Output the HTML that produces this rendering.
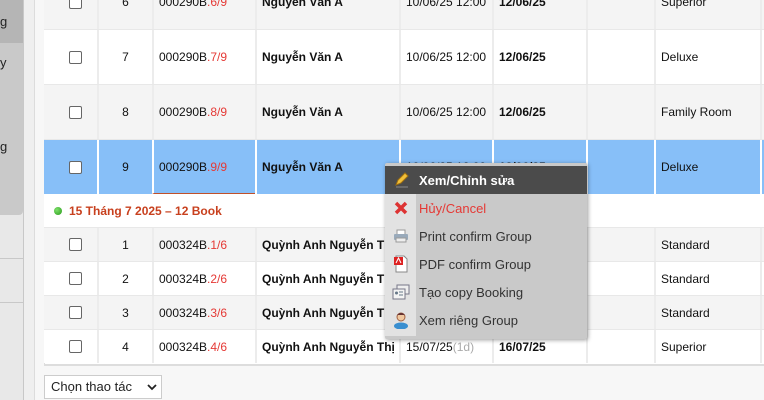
<!DOCTYPE html><html><head><meta charset="utf-8"><style>
body{margin:0;width:764px;height:400px;overflow:hidden;background:#f7f7f7;font-family:"Liberation Sans",Arial,sans-serif;font-size:12px;color:#111;position:relative}
.a{position:absolute}
.r{position:absolute;left:44px;width:730px;border-bottom:1px solid #e8e8e8}
.c{position:absolute;top:0;bottom:0;border-left:2px solid #ececec;display:flex;align-items:center;box-sizing:border-box;padding-left:5px}
.cb{width:11px;height:11px;border:1px solid #666;border-radius:2px;background:#fff;margin-left:20px}
.red{color:#e53935}
b{font-weight:bold}
.mi{position:absolute;left:385px;width:202px;height:28px;display:flex;align-items:center;font-size:13px;color:#333}
.ic{width:31px;height:28px;display:flex;align-items:center;justify-content:center}
</style></head><body>
<div class="a" style="left:0;top:0;width:23px;height:400px;background:#e8e8e8;border-right:1px solid #c8c8c8"></div>
<div class="a" style="left:0;top:0;width:23px;height:43px;background:#b5b5b5;font-size:13px;color:#222"><span class="a" style="left:0;top:14px">g</span></div>
<div class="a" style="left:0;top:43px;width:23px;height:172px;background:#c9c9c9;border-bottom-right-radius:4px;font-size:13px;color:#222"><span class="a" style="left:0;top:12px">y</span><span class="a" style="left:0;top:96px">g</span></div>
<div class="a" style="left:0;top:258px;width:23px;border-top:1px solid #c8c8c8"></div>
<div class="a" style="left:0;top:302px;width:23px;border-top:1px solid #c8c8c8"></div>
<div class="a" style="left:24px;top:0;width:10px;height:400px;background:#efefef;border-right:1px solid #dcdcdc"></div>
<div class="a" style="left:44px;top:0;width:720px;height:364px;background:#fff;border-left:1px solid #ddd;border-bottom:2px solid #ddd"></div>

<div class="r" style="top:-25px;height:54px;background:#f4f4f4"><div class="c" style="left:0;width:53px;border:0"><div class="cb"></div></div><div class="c" style="left:53px;width:55px;justify-content:center;padding:0">6</div><div class="c" style="left:108px;width:103px">000290B<span class="red">.6/9</span></div><div class="c" style="left:211px;width:144px"><b>Nguyễn Văn A</b></div><div class="c" style="left:355px;width:93px">10/06/25 12:00</div><div class="c" style="left:448px;width:94px"><b>12/06/25</b></div><div class="c" style="left:542px;width:68px"></div><div class="c" style="left:610px;width:106px">Superior</div><div class="c" style="left:716px;width:20px"></div></div>
<div class="r" style="top:30px;height:54px;background:#fff"><div class="c" style="left:0;width:53px;border:0"><div class="cb"></div></div><div class="c" style="left:53px;width:55px;justify-content:center;padding:0">7</div><div class="c" style="left:108px;width:103px">000290B<span class="red">.7/9</span></div><div class="c" style="left:211px;width:144px"><b>Nguyễn Văn A</b></div><div class="c" style="left:355px;width:93px">10/06/25 12:00</div><div class="c" style="left:448px;width:94px"><b>12/06/25</b></div><div class="c" style="left:542px;width:68px"></div><div class="c" style="left:610px;width:106px">Deluxe</div><div class="c" style="left:716px;width:20px"></div></div>
<div class="r" style="top:85px;height:54px;background:#f4f4f4"><div class="c" style="left:0;width:53px;border:0"><div class="cb"></div></div><div class="c" style="left:53px;width:55px;justify-content:center;padding:0">8</div><div class="c" style="left:108px;width:103px">000290B<span class="red">.8/9</span></div><div class="c" style="left:211px;width:144px"><b>Nguyễn Văn A</b></div><div class="c" style="left:355px;width:93px">10/06/25 12:00</div><div class="c" style="left:448px;width:94px"><b>12/06/25</b></div><div class="c" style="left:542px;width:68px"></div><div class="c" style="left:610px;width:106px">Family Room</div><div class="c" style="left:716px;width:20px"></div></div>
<div class="r" style="top:140px;height:54px;background:#87bff8;border-bottom:1px solid #fff"><div class="c" style="left:0;width:53px;border:0"><div class="cb"></div></div><div class="c" style="left:53px;width:55px;justify-content:center;padding:0;border-color:#fff">9</div><div class="c" style="left:108px;width:103px;border-color:#fff;border-bottom:1px solid #c0502a">000290B<span class="red">.9/9</span></div><div class="c" style="left:211px;width:144px;border-color:#fff"><b>Nguyễn Văn A</b></div><div class="c" style="left:355px;width:93px;border-color:#fff">10/06/25 12:00</div><div class="c" style="left:448px;width:94px;border-color:#fff"><b>12/06/25</b></div><div class="c" style="left:542px;width:68px;border-color:#fff"></div><div class="c" style="left:610px;width:106px;border-color:#fff">Deluxe</div><div class="c" style="left:716px;width:20px;border-color:#fff"></div></div>
<div class="r" style="top:195px;height:32px;background:#fff"><span class="a" style="left:10px;top:12px;width:8px;height:8px;border-radius:50%;background:radial-gradient(circle at 35% 35%,#7de06a,#2a9a1c)"></span><span class="a" style="left:25px;top:9px;color:#c8401e;font-weight:bold;font-size:12px">15 Tháng 7 2025 – 12 Book</span></div>
<div class="r" style="top:228px;height:33px;background:#f4f4f4"><div class="c" style="left:0;width:53px;border:0"><div class="cb"></div></div><div class="c" style="left:53px;width:55px;justify-content:center;padding:0">1</div><div class="c" style="left:108px;width:103px">000324B<span class="red">.1/6</span></div><div class="c" style="left:211px;width:144px;white-space:nowrap;overflow:hidden"><b>Quỳnh Anh Nguyễn Thị</b></div><div class="c" style="left:355px;width:93px"></div><div class="c" style="left:448px;width:94px"></div><div class="c" style="left:542px;width:68px"></div><div class="c" style="left:610px;width:106px">Standard</div><div class="c" style="left:716px;width:20px"></div></div>
<div class="r" style="top:262px;height:33px;background:#fff"><div class="c" style="left:0;width:53px;border:0"><div class="cb"></div></div><div class="c" style="left:53px;width:55px;justify-content:center;padding:0">2</div><div class="c" style="left:108px;width:103px">000324B<span class="red">.2/6</span></div><div class="c" style="left:211px;width:144px;white-space:nowrap;overflow:hidden"><b>Quỳnh Anh Nguyễn Thị</b></div><div class="c" style="left:355px;width:93px"></div><div class="c" style="left:448px;width:94px"></div><div class="c" style="left:542px;width:68px"></div><div class="c" style="left:610px;width:106px">Standard</div><div class="c" style="left:716px;width:20px"></div></div>
<div class="r" style="top:296px;height:33px;background:#f4f4f4"><div class="c" style="left:0;width:53px;border:0"><div class="cb"></div></div><div class="c" style="left:53px;width:55px;justify-content:center;padding:0">3</div><div class="c" style="left:108px;width:103px">000324B<span class="red">.3/6</span></div><div class="c" style="left:211px;width:144px;white-space:nowrap;overflow:hidden"><b>Quỳnh Anh Nguyễn Thị</b></div><div class="c" style="left:355px;width:93px"></div><div class="c" style="left:448px;width:94px"></div><div class="c" style="left:542px;width:68px"></div><div class="c" style="left:610px;width:106px">Standard</div><div class="c" style="left:716px;width:20px"></div></div>
<div class="r" style="top:330px;height:33px;background:#fff;border:0"><div class="c" style="left:0;width:53px;border:0"><div class="cb"></div></div><div class="c" style="left:53px;width:55px;justify-content:center;padding:0">4</div><div class="c" style="left:108px;width:103px">000324B<span class="red">.4/6</span></div><div class="c" style="left:211px;width:144px;white-space:nowrap;overflow:hidden"><b>Quỳnh Anh Nguyễn Thị</b></div><div class="c" style="left:355px;width:93px">15/07/25<span style="color:#aaa">(1d)</span></div><div class="c" style="left:448px;width:94px"><b>16/07/25</b></div><div class="c" style="left:542px;width:68px"></div><div class="c" style="left:610px;width:106px">Superior</div><div class="c" style="left:716px;width:20px"></div></div>

<div class="a" style="left:44px;top:375px;width:116px;height:22px;background:#fff;border:1px solid #ccc;font-size:13px;color:#222"><span class="a" style="left:6px;top:3px">Chọn thao tác</span><svg class="a" style="left:102px;top:8px" width="10" height="7"><path d="M1 1l4 4 4-4" fill="none" stroke="#222" stroke-width="1.8"/></svg></div>

<div class="a" style="left:385px;top:163px;width:202px;height:176px;background:#c9c9c9;box-shadow:1px 1px 4px rgba(0,0,0,.4);border-radius:2px"></div>
<div class="a" style="left:385px;top:194px;width:31px;height:142px;background:#e2e2e2"></div>
<div class="mi" style="top:166px;background:#4b4b4b;color:#fff;font-weight:bold"><div class="ic"><svg width="16" height="16"><path d="M3 13l2-5 7-7 3 3-7 7z" fill="#f2c03a" stroke="#a07010"/><path d="M3 15h12" stroke="#888"/></svg></div><span style="margin-left:3px">Xem/Chỉnh sửa</span></div>
<div class="mi" style="top:194px;color:#e53935"><div class="ic"><svg width="14" height="14"><path d="M2 2l10 10M12 2L2 12" stroke="#d33" stroke-width="3.5"/></svg></div><span style="margin-left:3px">Hủy/Cancel</span></div>
<div class="mi" style="top:222px"><div class="ic"><svg width="16" height="16"><rect x="4" y="2" width="8" height="5" fill="#fff" stroke="#999"/><rect x="1" y="6" width="14" height="6" rx="1" fill="#9ab"/><rect x="3" y="10" width="10" height="4" fill="#eee" stroke="#999"/></svg></div><span style="margin-left:3px">Print confirm Group</span></div>
<div class="mi" style="top:250px"><div class="ic"><svg width="16" height="18"><path d="M3 1h8l3 3v13H3z" fill="#fff" stroke="#888"/><rect x="1" y="2" width="9" height="8" fill="#d22"/><path d="M3 8l2.5-5 2.5 5" stroke="#fff" fill="none"/></svg></div><span style="margin-left:3px">PDF confirm Group</span></div>
<div class="mi" style="top:278px"><div class="ic"><svg width="18" height="16"><rect x="5" y="1" width="12" height="9" fill="#eee" stroke="#778"/><rect x="1" y="5" width="12" height="10" fill="#f4f4f4" stroke="#778"/><circle cx="4.5" cy="9" r="1.5" fill="#678"/><path d="M7 8h4M7 11h4" stroke="#678"/></svg></div><span style="margin-left:3px">Tạo copy Booking</span></div>
<div class="mi" style="top:306px"><div class="ic"><svg width="18" height="18"><circle cx="9" cy="6" r="4" fill="#f0c8a0" stroke="#a06040"/><path d="M5 4q4-4 8 0" fill="#633"/><ellipse cx="9" cy="15" rx="7" ry="3.5" fill="#3a8fd0"/></svg></div><span style="margin-left:3px">Xem riêng Group</span></div>
</body></html>
